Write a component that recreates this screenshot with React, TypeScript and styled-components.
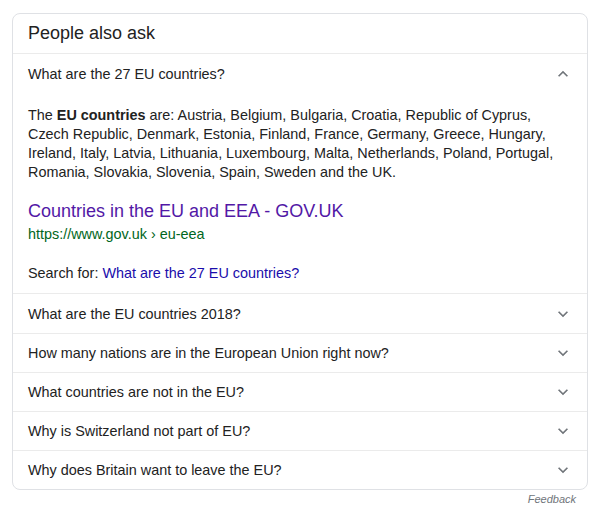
import styled, { createGlobalStyle } from "styled-components";

const GlobalStyle = createGlobalStyle`
  body {
    margin: 0;
    background: #fff;
    font-family: "Liberation Sans", Arial, sans-serif;
    color: #222;
  }
`;

const Page = styled.div`
  padding: 13px 9px 0 12px;
`;

const Card = styled.div`
  border: 1px solid #dfe1e5;
  border-radius: 8px;
  overflow: hidden;
`;

const Header = styled.div`
  height: 39px;
  display: flex;
  align-items: center;
  padding: 0 15px;
  font-size: 18px;
  color: #222;
  border-bottom: 1px solid #ebebeb;
`;

const Question = styled.div<{ $last?: boolean }>`
  border-bottom: ${(p) => (p.$last ? "none" : "1px solid #ebebeb")};
`;

const QuestionRow = styled.div<{ $tall?: boolean }>`
  height: ${(p) => (p.$tall ? "39px" : "38px")};
  display: flex;
  align-items: center;
  justify-content: space-between;
  padding: 0 14px 0 15px;
  font-size: 14.4px;
  color: #222;
`;

const Chevron = styled.svg<{ $up?: boolean }>`
  width: 20px;
  height: 20px;
  fill: #70757a;
  transform: ${(p) => (p.$up ? "rotate(180deg)" : "none")};
`;

const Answer = styled.div`
  padding: 13px 15px 10px;
  font-size: 14.4px;
`;

const AnswerText = styled.div`
  line-height: 19px;
  color: #222;
`;

const ResultTitle = styled.a`
  display: block;
  margin-top: 17px;
  font-size: 18px;
  line-height: 24px;
  color: #5218a6;
  text-decoration: none;
`;

const ResultUrl = styled.div`
  line-height: 22px;
  color: #006621;
`;

const SearchFor = styled.div`
  margin-top: 18px;
  line-height: 20px;
  color: #222;
`;

const SearchLink = styled.a`
  color: #1a0dab;
  text-decoration: none;
`;

const Feedback = styled.div`
  text-align: right;
  padding: 3px 12px 0 0;
  font-size: 11px;
  font-style: italic;
  color: #70757a;
`;

function ChevronIcon({ up }: { up?: boolean }) {
  return (
    <Chevron $up={up} viewBox="0 0 24 24">
      <path d="M16.59 8.59L12 13.17 7.41 8.59 6 10l6 6 6-6z" />
    </Chevron>
  );
}

const others = [
  "What are the EU countries 2018?",
  "How many nations are in the European Union right now?",
  "What countries are not in the EU?",
  "Why is Switzerland not part of EU?",
  "Why does Britain want to leave the EU?",
];

export default function App() {
  return (
    <Page>
      <GlobalStyle />
      <Card>
        <Header>People also ask</Header>
        <Question>
          <QuestionRow $tall>
            What are the 27 EU countries?
            <ChevronIcon up />
          </QuestionRow>
          <Answer>
            <AnswerText>
              The <b>EU countries</b> are: Austria, Belgium, Bulgaria, Croatia,
              Republic of Cyprus, Czech Republic, Denmark, Estonia, Finland,
              France, Germany, Greece, Hungary, Ireland, Italy, Latvia,
              Lithuania, Luxembourg, Malta, Netherlands, Poland, Portugal,
              Romania, Slovakia, Slovenia, Spain, Sweden and the UK.
            </AnswerText>
            <ResultTitle href="#">Countries in the EU and EEA - GOV.UK</ResultTitle>
            <ResultUrl>https://www.gov.uk › eu-eea</ResultUrl>
            <SearchFor>
              Search for: <SearchLink href="#">What are the 27 EU countries?</SearchLink>
            </SearchFor>
          </Answer>
        </Question>
        {others.map((q, i) => (
          <Question key={q} $last={i === others.length - 1}>
            <QuestionRow $tall={i === 0}>
              {q}
              <ChevronIcon />
            </QuestionRow>
          </Question>
        ))}
      </Card>
      <Feedback>Feedback</Feedback>
    </Page>
  );
}
